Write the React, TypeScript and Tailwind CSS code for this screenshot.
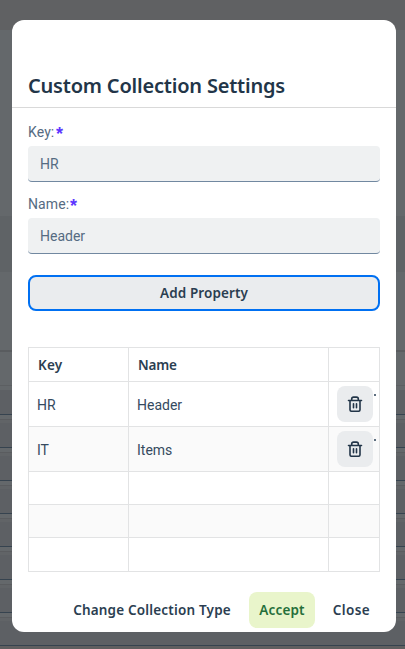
import React from 'react';

const backdropRows = ['a', 'b', 'c', 'd', 'e', 'f', 'g'];

function Backdrop() {
  return (
    <div className="flex h-[649px] w-full flex-col overflow-hidden bg-[#64686b]" aria-hidden="true">
      <div className="h-[30px] shrink-0 bg-[#606163]" />
      <div className="h-[186px] shrink-0" />
      <div className="h-14 shrink-0 bg-[#5f6366]" />
      <div className="h-[80px] shrink-0 border-b-2 border-[#595c5f]" />
      <div className="h-[34px] shrink-0 border-b border-[#5c5f62]" />
      <div className="h-1 shrink-0" />
      <div className="h-[25px] shrink-0 border-b border-[#36434f] bg-[#5d6064]" />
      {backdropRows.map((row) => (
        <div key={row} className="flex h-[33px] shrink-0 flex-col border-b border-[#36434f]">
          <div className="h-[5px] border-b border-[#5a5c5f]" />
          <div className="h-[3px] bg-[#616467]" />
          <div className="grow bg-[#5d6064]" />
        </div>
      ))}
      <div className="grow bg-[#605f60]" />
    </div>
  );
}

function TrashIcon() {
  return (
    <svg width="16" height="16" viewBox="0 0 16 16" fill="none" stroke="#223548" strokeWidth="1.6" strokeLinecap="round" strokeLinejoin="round">
      <path d="M1.5 4.5h13M4.7 4.25V2.9c0-1.1.7-1.8 1.8-1.8h3c1.1 0 1.8.7 1.8 1.8v1.35M3 4.75v9c0 .9.6 1.5 1.5 1.5h7c.9 0 1.5-.6 1.5-1.5v-9M6.5 7.7v4.1M9.5 7.7v4.1" />
    </svg>
  );
}

function Field({ label, value, width }: { label: string; value: string; width: string }) {
  return (
    <div className="h-[72px]">
      <div className="flex h-6 items-start pt-[2px] text-[14px] leading-4 text-[#556b82]">
        <span className={`${width} tracking-[0.1px]`}>{label}</span>
        <span className="ml-px mt-[2px] font-['Liberation_Sans',sans-serif] text-[18px] font-bold leading-4 text-[#5d36ff]">*</span>
      </div>
      <div className="flex h-9 items-center overflow-hidden rounded border-b border-[#7188a0] bg-[#eff1f2] px-3 pt-[2px] text-[14px] text-[#556b82]">
        {value}
      </div>
    </div>
  );
}

const rows = [
  { key: 'HR', name: 'Header', size: 'h-[45px]', bg: 'bg-white' },
  { key: 'IT', name: 'Items', size: 'h-[45px]', bg: 'bg-[#fafafa]' },
  { key: '', name: '', size: 'h-[33px]', bg: 'bg-white' },
  { key: '', name: '', size: 'h-[33px]', bg: 'bg-[#fafafa]' },
  { key: '', name: '', size: 'h-[34px]', bg: 'bg-white' },
];

function PropertyTable() {
  return (
    <div className="mt-9 w-[352px] border-l border-t border-[#e2e3e4] text-[14px] text-[#354a5f]">
      <div className="grid h-[34px] grid-cols-[100px_200px_51px] font-['Noto_Sans',sans-serif] text-[13.5px] font-semibold text-[#2b3e51]">
        <div className="flex items-center border-b border-r border-[#e2e3e4] px-[9px] pt-[2px] tracking-[0.2px]">Key</div>
        <div className="flex items-center border-b border-r border-[#e2e3e4] px-[9px] pt-[2px] tracking-[-0.2px]">Name</div>
        <div className="border-b border-r border-[#e2e3e4]" />
      </div>
      {rows.map((row, i) => (
        <div key={i} className={`grid grid-cols-[100px_200px_51px] ${row.size} ${row.bg}`}>
          <div className="flex items-center border-b border-r border-[#e2e3e4] px-2 pt-[2px]">{row.key}</div>
          <div className="flex items-center border-b border-r border-[#e2e3e4] px-2 pt-[2px]">{row.name}</div>
          <div className="flex border-b border-r border-[#e2e3e4] pl-2 pt-1">
            {row.key && (
              <>
                <button className="flex size-9 shrink-0 items-center justify-center rounded-lg bg-[#eaecee]" aria-label="Delete">
                  <TrashIcon />
                </button>
                <span className="ml-[1px] mt-2 h-[2px] w-[2px] bg-[#5d6e7f]" />
              </>
            )}
          </div>
        </div>
      ))}
    </div>
  );
}

export default function App() {
  return (
    <div className="relative h-[649px] w-full overflow-hidden font-[Roboto,sans-serif]">
      <Backdrop />
      <div className="absolute inset-0 px-3 pt-5">
        <section role="dialog" className="flex h-[612px] w-[384px] flex-col rounded-xl bg-white">
          <header className="flex h-[88px] shrink-0 items-end border-b border-[#d9d9d9] px-4 pb-2">
            <h2 className="whitespace-nowrap font-['Noto_Sans',sans-serif] text-[20px] font-semibold leading-[26px] tracking-[-0.2px] text-[#223548]">
              Custom Collection Settings
            </h2>
          </header>
          <main className="px-4 pt-[14px]">
            <Field label="Key:" value="HR" width="w-[27px]" />
            <Field label="Name:" value="Header" width="w-[41px]" />
            <button className="mt-[9px] flex h-9 w-full items-center justify-center rounded-lg border-2 border-[#0070f2] bg-[#eaecee] font-['Noto_Sans',sans-serif] text-[13.5px] font-semibold tracking-[0.1px] text-[#2b3e51]">
              Add Property
            </button>
            <PropertyTable />
          </main>
          <footer className="mt-5 flex h-9 items-center justify-end whitespace-nowrap pr-4 font-['Noto_Sans',sans-serif] text-[13.5px] font-semibold tracking-[0.18px] text-[#2b3e51]">
            <button className="mr-2 w-[178px]">Change Collection Type</button>
            <button className="mr-2 h-9 w-[66px] rounded-lg bg-[#e9f5cb] text-[#256f3a]">Accept</button>
            <button className="w-[57px] tracking-[0.4px]">Close</button>
          </footer>
        </section>
      </div>
    </div>
  );
}
